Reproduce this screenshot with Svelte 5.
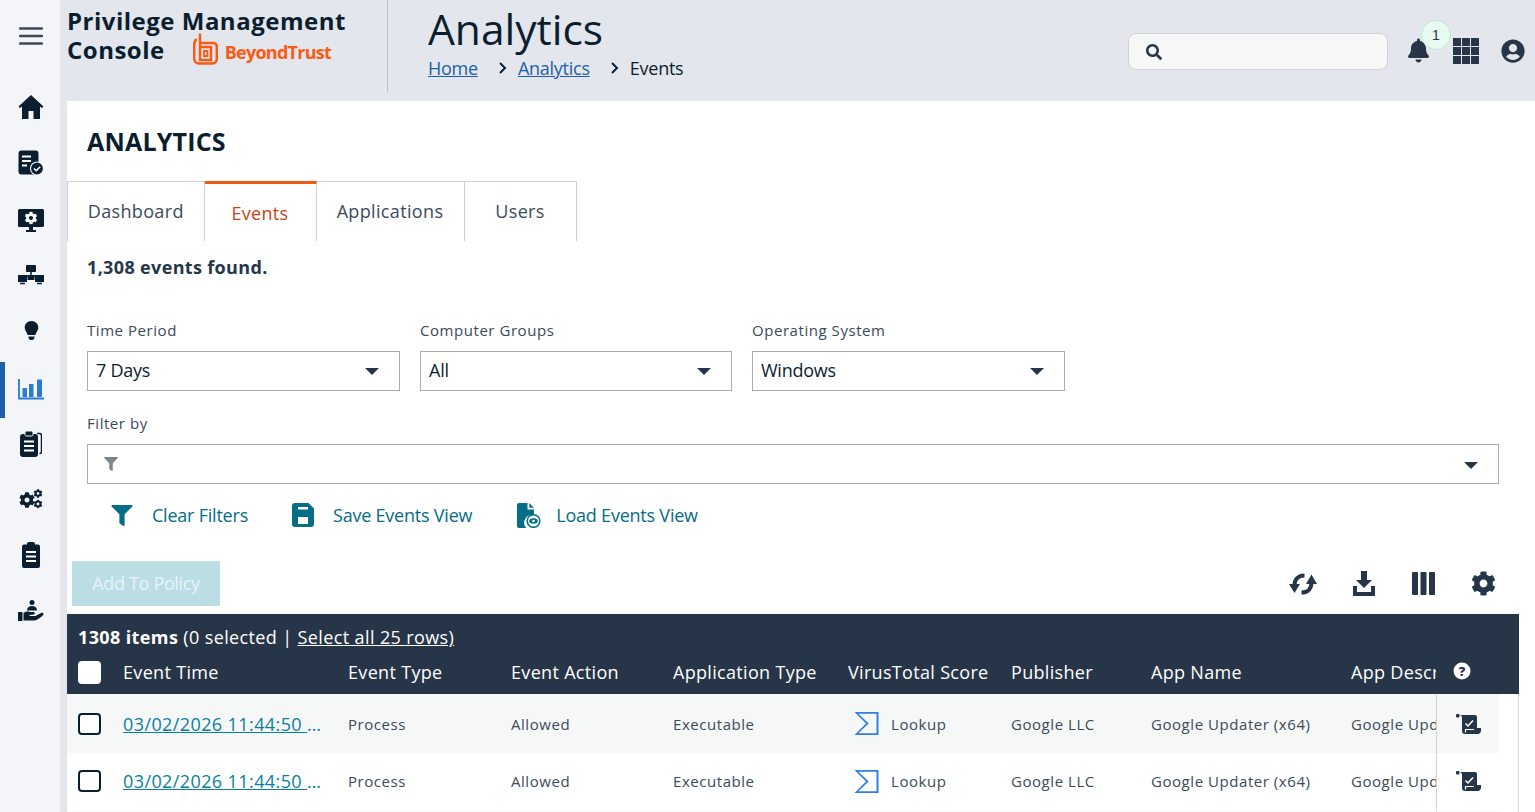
<script>
  const gear = "M487.4 315.7l-42.6-24.6c4.3-23.2 4.3-47 0-70.2l42.6-24.6c4.9-2.8 7.1-8.6 5.5-14-11.1-35.6-30-67.8-54.7-94.6-3.8-4.1-10-5.1-14.8-2.3L380.8 110c-17.9-15.4-38.5-27.3-60.8-35.1V25.8c0-5.6-3.9-10.5-9.4-11.7-36.7-8.2-74.3-7.8-109.2 0-5.5 1.2-9.4 6.1-9.4 11.7V75c-22.2 7.9-42.8 19.8-60.8 35.1L88.7 85.5c-4.9-2.8-11-1.9-14.8 2.3-24.7 26.7-43.6 58.9-54.7 94.6-1.7 5.4.6 11.2 5.5 14L67.3 221c-4.3 23.2-4.3 47 0 70.2l-42.6 24.6c-4.9 2.8-7.1 8.6-5.5 14 11.1 35.6 30 67.8 54.7 94.6 3.8 4.1 10 5.1 14.8 2.3l42.6-24.6c17.9 15.4 38.5 27.3 60.8 35.1v49.2c0 5.6 3.9 10.5 9.4 11.7 36.7 8.2 74.3 7.8 109.2 0 5.5-1.2 9.4-6.1 9.4-11.7v-49.2c22.2-7.9 42.8-19.8 60.8-35.1l42.6 24.6c4.9 2.8 11 1.9 14.8-2.3 24.7-26.7 43.6-58.9 54.7-94.6 1.5-5.5-.7-11.3-5.6-14.1zM256 336c-44.1 0-80-35.9-80-80s35.9-80 80-80 80 35.9 80 80-35.9 80-80 80z";
  const funnel = "M487.976 0H24.028C2.71 0-8.047 25.866 7.058 40.971L192 225.941V432c0 7.831 3.821 15.17 10.237 19.662l80 55.98C298.02 518.69 320 507.493 320 487.98V225.941l184.947-184.97C520.021 25.896 509.338 0 487.976 0z";
  const rows = [1, 2, 3];
  const selects = [
    { label: "Time Period", value: "7 Days" },
    { label: "Computer Groups", value: "All" },
    { label: "Operating System", value: "Windows" }
  ];
  const heads = ["Event Time", "Event Type", "Event Action", "Application Type", "VirusTotal Score", "Publisher", "App Name", "App Description"];
</script>

<div class="layout">
  <nav class="side">
    <button class="burger" aria-label="menu">
      <svg width="24" height="20" viewBox="0 0 24 20"><path d="M1 2.500h22M1 10h22M1 17.500h22" stroke="#3d4a58" stroke-width="2.400" stroke-linecap="round"/></svg>
    </button>
    <div class="nav-item">
      <svg width="26" height="26" viewBox="0 0 26 26"><path class="d" d="M13 1 L0.500 12.600 L2 14 L4 12.600 V25 H10.500 V17 H15.500 V25 H22 V12.600 L24 14 L25.500 12.600 Z"/></svg>
    </div>
    <div class="nav-item">
      <svg width="26" height="26" viewBox="0 0 26 26"><rect class="d" x="0.500" y="0.500" width="20" height="24" rx="3"/><path d="M4 6.500h9M4 11h9M4 15.500h5" stroke="#fff" stroke-width="2"/><circle cx="19" cy="18.500" r="6.500" fill="#0b1e30" stroke="#f3f5f8" stroke-width="1.200"/><path d="M16 18.500l2.200 2.200 4-4" stroke="#fff" stroke-width="1.600" fill="none"/></svg>
    </div>
    <div class="nav-item">
      <svg class="mon" width="26" height="23" viewBox="0 0 26 23"><rect class="d" x="0" y="0" width="26" height="18" rx="1.500"/><path class="d" d="M11 18h4v3h3v2H8v-2h3z"/><svg x="6.500" y="2.500" width="13" height="13" viewBox="0 0 512 512"><path d={gear} fill="#fff"/></svg></svg>
    </div>
    <div class="nav-item">
      <svg width="26" height="20" viewBox="0 0 26 20"><rect class="d" x="8" y="0" width="10" height="7" rx="1"/><path d="M13 7v4M4.500 11h17M4.500 11v2M21.500 11v2" stroke="#0b1e30" stroke-width="1.500" fill="none"/><rect class="d" x="0" y="10" width="9" height="7"/><rect class="d" x="17" y="10" width="9" height="7"/><rect class="d" x="9.500" y="10" width="7" height="5"/><path d="M2 18.500h5M19 18.500h5" stroke="#0b1e30" stroke-width="1.500"/></svg>
    </div>
    <div class="nav-item">
      <svg width="15" height="20" viewBox="0 0 16 22"><path class="d" d="M8 0C3.400 0 .5 3.300.5 7.200c0 3.300 2.400 5 3.200 8.300h8.600c.8-3.300 3.200-5 3.200-8.300C15.500 3.300 12.600 0 8 0z"/><path class="d" d="M4.500 17h7l-.6 2.500-1.400 1.500h-3l-1.400-1.500z"/></svg>
    </div>
    <div class="nav-item active">
      <svg width="26" height="21" viewBox="0 0 26 21"><path d="M1 0v19.500h25" stroke="#2c7ad6" stroke-width="1.800" fill="none"/><rect class="b" x="4.500" y="9" width="4.500" height="9"/><rect class="b" x="11" y="5" width="4.500" height="13"/><rect class="b" x="19" y="0.500" width="5" height="17.500" rx="1"/></svg>
    </div>
    <div class="nav-item">
      <svg width="22" height="27" viewBox="0 0 22 27"><path d="M17 3.500h2.500a2 2 0 0 1 2 2v16a2 2 0 0 1-2 2" stroke="#0b1e30" stroke-width="1.500" fill="none"/><rect class="d" x="0" y="4" width="18" height="23" rx="3"/><rect x="5" y="1" width="8" height="5" rx="1.500" fill="#0b1e30" stroke="#f3f5f8" stroke-width="1"/><path d="M4 11.500h10M4 16h10M4 20.500h10" stroke="#fff" stroke-width="2"/></svg>
    </div>
    <div class="nav-item">
      <svg width="24" height="20" viewBox="0 0 24 20"><svg x="0" y="3" width="16" height="16" viewBox="0 0 512 512"><path class="d" d={gear}/></svg><svg x="14.500" y="0" width="9" height="9" viewBox="0 0 512 512"><path class="d" d={gear}/></svg><svg x="14.500" y="10.500" width="9" height="9" viewBox="0 0 512 512"><path class="d" d={gear}/></svg></svg>
    </div>
    <div class="nav-item">
      <svg width="18" height="26" viewBox="0 0 18 26"><rect class="d" x="0" y="2.500" width="18" height="23.500" rx="2"/><rect class="d" x="5" y="0" width="8" height="5" rx="2"/><path d="M4 10h10M4 14.500h10M4 19h10" stroke="#fff" stroke-width="2"/></svg>
    </div>
    <div class="nav-item">
      <svg width="26" height="22" viewBox="0 0 26 22"><circle class="d" cx="14" cy="2.500" r="2.500"/><path class="d" d="M9 10.500c0-3 2-4.500 5-4.500s5 1.500 5 4.500z"/><rect class="d" x="0" y="12" width="4.500" height="9"/><path class="d" d="M5.500 13c2.500-1.500 4.500-1.800 6.500-1h3.500c1.500 0 1.700 2 .5 2.600l-4.500.4v1l6 0 5.500-3c1.800-.8 3.400.8 2 2.200-2.500 2-5.500 5-9 5.300H5.500z"/></svg>
    </div>
  </nav>

  <div class="content">
    <header class="top">
      <div class="brand">
        <div class="brand-name">Privilege Management</div>
        <div class="brand-row">
          <span class="brand-name">Console</span>
          <span class="logo">
            <svg width="25" height="32" viewBox="0 0 25 32" fill="none" stroke="#fb5a14" stroke-width="2.500"><path d="M3.500 6C2 7.500 1.200 9.500 1.200 12V25C1.200 28 3 30.500 6 30.500H19.500C22 30.500 23.800 28.500 23.800 25.500V14C23.800 11.500 22.500 10 20 10H7"/><path d="M7 0.500V27H18V14H7"/><path d="M11 18H14.500V23H11z" stroke-width="1.800"/></svg>
            <span class="logo-text">BeyondTrust</span>
          </span>
        </div>
      </div>
      <div class="crumbs">
        <h1 class="page">Analytics</h1>
        <div class="trail">
          <a href="#home">Home</a>
          <svg class="chev" width="10" height="12" viewBox="0 0 10 12"><path d="M2 1l5 5-5 5" stroke="#0b1e30" stroke-width="2" fill="none"/></svg>
          <a href="#analytics">Analytics</a>
          <svg class="chev" width="10" height="12" viewBox="0 0 10 12"><path d="M2 1l5 5-5 5" stroke="#0b1e30" stroke-width="2" fill="none"/></svg>
          <span>Events</span>
        </div>
      </div>
      <div class="tools">
        <div class="search">
          <svg width="16" height="16" viewBox="0 0 512 512"><path class="n" d="M505 442.7L405.3 343c-4.500-4.500-10.600-7-17-7H372c27.600-35.300 44-79.700 44-128C416 93.100 322.900 0 208 0S0 93.100 0 208s93.100 208 208 208c48.300 0 92.700-16.400 128-44v16.300c0 6.400 2.500 12.500 7 17l99.700 99.700c9.400 9.400 24.600 9.400 33.900 0l28.300-28.300c9.400-9.400 9.400-24.600.1-34zM208 336c-70.700 0-128-57.200-128-128 0-70.700 57.200-128 128-128 70.700 0 128 57.200 128 128 0 70.700-57.200 128-128 128z"/></svg>
        </div>
        <div class="bell">
          <svg width="21" height="25" viewBox="0 0 448 512"><path class="n" d="M224 512c35.320 0 63.970-28.650 63.970-64H160.030c0 35.350 28.650 64 63.970 64zm215.390-149.710c-19.320-20.760-55.470-51.990-55.470-154.290 0-77.700-54.480-139.900-127.940-155.160V32c0-17.670-14.320-32-31.980-32s-31.980 14.330-31.980 32v20.840C118.560 68.100 64.080 130.300 64.080 208c0 102.300-36.150 133.530-55.470 154.290-6 6.450-8.660 14.160-8.610 21.710.11 16.400 12.980 32 32.100 32h383.800c19.120 0 32-15.600 32.100-32 .05-7.550-2.610-15.270-8.610-21.710z"/></svg>
          <span class="badge">1</span>
        </div>
        <div class="apps">
          {#each Array(9) as _}<i></i>{/each}
        </div>
        <svg class="user" width="24" height="24" viewBox="0 0 496 512"><path class="n" d="M248 8C111 8 0 119 0 256s111 248 248 248 248-111 248-248S385 8 248 8zm0 96c48.600 0 88 39.400 88 88s-39.400 88-88 88-88-39.400-88-88 39.400-88 88-88zm0 344c-58.700 0-111.300-26.600-146.500-68.200 18.800-35.400 55.600-59.800 98.500-59.800 2.400 0 4.800.4 7.100 1.100 13 4.200 26.600 6.900 40.900 6.900 14.300 0 28-2.700 40.900-6.900 2.300-.7 4.700-1.100 7.100-1.100 42.900 0 79.700 24.400 98.500 59.800C359.300 421.400 306.700 448 248 448z"/></svg>
      </div>
    </header>

    <main class="main">
      <h2 class="section">ANALYTICS</h2>
      <div class="tabs">
        <div class="tab t1">Dashboard</div>
        <div class="tab t2 on">Events</div>
        <div class="tab t3">Applications</div>
        <div class="tab t4">Users</div>
      </div>
      <div class="found">1,308 events found.</div>

      <div class="selects">
        {#each selects as s}
          <div>
            <div class="lbl">{s.label}</div>
            <div class="select"><span>{s.value}</span><i class="caret"></i></div>
          </div>
        {/each}
      </div>

      <div class="filter">
        <div class="lbl">Filter by</div>
        <div class="select">
          <svg class="fil" width="14" height="14" viewBox="0 0 512 512"><path d={funnel} fill="#7f8489"/></svg>
          <i class="caret"></i>
        </div>
      </div>

      <div class="actions">
        <a class="act a1" href="#clear">
          <svg width="22" height="21" viewBox="0 0 512 512"><path d={funnel} class="t"/></svg>
          <span>Clear Filters</span>
        </a>
        <a class="act a2" href="#save">
          <svg width="22" height="24" viewBox="0 0 22 24"><path fill-rule="evenodd" class="t" d="M3 0h13.500l5.500 5.500V21a3 3 0 0 1-3 3H3a3 3 0 0 1-3-3V3a3 3 0 0 1 3-3zM6 4v2.500h10V4zM6 14v7h10v-7z"/></svg>
          <span>Save Events View</span>
        </a>
        <a class="act a3" href="#load">
          <svg width="24" height="25" viewBox="0 0 24 25"><path class="t" d="M2 0h8.500v6.500H17v6A7.500 7.500 0 0 0 9.500 25H2a2 2 0 0 1-2-2V2a2 2 0 0 1 2-2zM12.300 0 17 4.800h-4.700z"/><circle cx="16.500" cy="18" r="6.300" fill="#fff" stroke="#056d85" stroke-width="1.500"/><ellipse cx="16.500" cy="18" rx="4.300" ry="2.800" class="t"/><circle cx="16.500" cy="18" r="1.300" fill="#fff"/></svg>
          <span>Load Events View</span>
        </a>
      </div>

      <div class="bar">
        <button class="add" disabled>Add To Policy</button>
        <div class="bar-icons">
          <span class="bi">
            <svg width="28" height="24" viewBox="0 0 28 24"><path d="M15.500 3.500C9 3.500 5.500 7.500 5.500 13.500" stroke="#263648" stroke-width="4" fill="none"/><path class="n" d="M0 12H11L5.500 21z"/><path d="M12.500 20.500C19 20.500 22.500 16.500 22.500 10.500" stroke="#263648" stroke-width="4" fill="none"/><path class="n" d="M17 12H28L22.500 2.500z"/></svg>
          </span>
          <span class="bi dl">
            <svg width="22" height="25" viewBox="0 0 22 25"><path class="n" d="M8 0h6v9h5l-8 8-8-8h5z"/><path class="n" d="M0 15h4v6h14v-6h4v10H0z"/></svg>
          </span>
          <span class="bi">
            <svg width="23" height="23" viewBox="0 0 23 23"><rect class="n" x="0" y="0" width="6" height="23" rx="1"/><rect class="n" x="8.500" y="0" width="6" height="23" rx="1"/><rect class="n" x="17" y="0" width="6" height="23" rx="1"/></svg>
          </span>
          <span class="bi">
            <svg width="25" height="25" viewBox="0 0 512 512"><path class="n" d={gear}/></svg>
          </span>
        </div>
      </div>

      <div class="table">
        <div class="thead">
          <div class="summary"><b>1308 items</b> (0 selected | <u>Select all 25 rows)</u></div>
          <div class="grid hrow">
            <span class="hcheck"></span>
            {#each heads as h}<span class="cell">{h}</span>{/each}
            <span class="help">
              <svg width="18" height="18" viewBox="0 0 18 18"><circle cx="9" cy="9" r="8.500" fill="#fff"/><text x="9" y="13.500" text-anchor="middle" class="q">?</text></svg>
            </span>
          </div>
        </div>
        <div class="tbody">
          {#each rows as r}
            <div class="grid row">
              <span class="check"></span>
              <span class="cell time"><a href="#event">03/02/2026 11:44:50 AM</a></span>
              <span class="cell">Process</span>
              <span class="cell">Allowed</span>
              <span class="cell">Executable</span>
              <span class="cell vt">
                <svg width="25" height="23" viewBox="0 0 25 23"><path fill-rule="evenodd" fill="#2f7fe8" d="M.5 0h24v23H.5L12 11.500zM4.500 1.800 14.600 11.500 4.500 21.200H22.500V1.800z"/></svg>
                <span>Lookup</span>
              </span>
              <span class="cell">Google LLC</span>
              <span class="cell">Google Updater (x64)</span>
              <span class="cell">Google Update</span>
              <span class="act-cell">
                <svg width="25" height="20" viewBox="0 0 25 20"><rect class="n" x="0" y="0" width="3.500" height="3.500" rx="1"/><path class="n" d="M4 1h15a2 2 0 0 1 2 2v11h4v2.500c0 2-1.500 3.500-3 3.500H9c-2 0-3-1-3-3V4c0-1.500-.5-2.500-2-3z"/><path d="M9.500 9.500l2.500 2.500 5-5.500" stroke="#fff" stroke-width="1.500" fill="none"/><path d="M9 15.500h9M9.500 15.500v3" stroke="#fff" stroke-width="1.200" fill="none"/></svg>
              </span>
            </div>
          {/each}
        </div>
      </div>
    </main>
  </div>
</div>

<style>
  :global(body) {
    margin: 0;
    height: 812px;
    overflow: hidden;
    font-family: "Open Sans", "Noto Sans", sans-serif;
    background: #e3e6ec;
  }
  .d { fill: #0b1e30; }
  .b { fill: #2c7ad6; }
  .n { fill: #263648; }
  .t { fill: #056d85; }

  .layout { display: flex; height: 812px; overflow: hidden; }

  .side { width: 60px; box-sizing: border-box; padding-left: 2px; flex: none; background: #f3f5f8; display: flex; flex-direction: column; align-items: stretch; }
  .burger { height: 79px; padding: 0 0 7px; border: 0; background: none; display: flex; align-items: center; justify-content: center; }
  .nav-item { height: 56px; flex: none; display: flex; align-items: center; justify-content: center; position: relative; }
  .active::before { content: ""; position: absolute; left: -2px; top: 3px; width: 5px; height: 56px; background: #1c5fa8; }
  .active svg { margin-top: 4px; }
  .mon { margin-top: 2px; }

  .content { flex: 1; min-width: 0; display: flex; flex-direction: column; }

  .top { height: 101px; flex: none; display: flex; color: #0b1e30; }
  .brand { width: 328px; height: 92px; box-sizing: border-box; padding: 6px 0 0 7px; border-right: 1px solid #b9c0cb; }
  .brand-name { font-size: 24px; font-weight: 700; line-height: 29px; letter-spacing: .5px; }
  .brand-row { display: flex; align-items: flex-start; }
  .logo { display: flex; align-items: center; margin: -2px 0 0 28px; gap: 7px; }
  .logo-text { font-size: 18px; font-weight: 700; color: #fb5a14; letter-spacing: -.75px; line-height: 24px; margin-top: 6px; }
  .crumbs { padding-left: 40px; }
  .page { margin: 0; font-size: 42.500px; font-weight: 400; line-height: 50px; margin-top: 4px; color: #0b1e30; }
  .trail { display: flex; align-items: center; font-size: 18px; line-height: 24px; margin-top: 2px; letter-spacing: -.25px; }
  .trail a { color: #1c5fa8; }
  .chev { margin: 0 10px 0 20px; }
  .tools { margin-left: auto; display: flex; align-items: flex-start; }
  .search { width: 260px; height: 37px; margin-top: 33px; box-sizing: border-box; background: #f6f8f8; border: 1px solid #d0d3d8; border-radius: 8px; display: flex; align-items: center; padding-left: 17px; }
  .bell { position: relative; margin: 38px 0 0 20px; height: 25px; width: 20px; }
  .badge { position: absolute; left: 13px; top: -18px; width: 30px; height: 30px; box-sizing: border-box; border-radius: 50%; background: #e8fbf1; border: 1px solid #b8eed0; display: flex; align-items: center; justify-content: center; font-size: 14px; color: #263648; font-family: "Liberation Sans", sans-serif; }
  .apps { margin: 38px 0 0 25px; display: grid; grid-template-columns: repeat(3, 8px); grid-auto-rows: 8px; gap: 1px; }
  .apps i { background: #263648; display: block; }
  .user { margin: 39px 10px 0 22px; }

  .main { flex: 1; margin-left: 7px; background: #fff; }
  .section { margin: 0 0 0 20px; height: 80px; box-sizing: border-box; padding-top: 23px; font-size: 25px; line-height: 34px; font-weight: 700; color: #0b1e30; letter-spacing: .2px; }
  .tabs { display: flex; height: 60px; }
  .tab { box-sizing: border-box; border: 1px solid #cfd2d6; border-bottom: 0; border-left: 0; display: flex; align-items: center; justify-content: center; font-size: 18px; color: #3a4a5c; padding-bottom: 2px; letter-spacing: .35px; }
  .t1 { width: 137.500px; border-left: 1px solid #cfd2d6; }
  .t2 { width: 112px; }
  .t3 { width: 148px; }
  .t4 { width: 112px; }
  .on { border-top: 3px solid #f05a14; color: #c8431a; letter-spacing: .3px; padding-bottom: 0; }
  .found { height: 52px; padding-left: 20px; display: flex; align-items: center; font-size: 18px; font-weight: 700; color: #26374a; letter-spacing: .35px; }

  .lbl { height: 20px; line-height: 20px; font-size: 15px; color: #3a4a5c; letter-spacing: .55px; margin-bottom: 11px; }
  .selects { margin: 27px 0 0 20px; display: grid; grid-template-columns: 313px 312px 313px; gap: 20px; }
  .select { height: 40px; box-sizing: border-box; border: 1px solid #a9acb1; display: flex; align-items: center; justify-content: space-between; padding: 0 20px 2px 8px; font-size: 18px; color: #0b1e30; letter-spacing: -.25px; }
  .caret { width: 0; height: 0; border-left: 7px solid transparent; border-right: 7px solid transparent; border-top: 7px solid #263648; margin-top: 2px; }
  .filter { margin: 22px 36px 0 20px; }
  .filter .select { padding-bottom: 0; }
  .fil { margin-left: 8px; }

  .actions { display: flex; height: 40px; margin-top: 11px; align-items: center; }
  .act { display: flex; align-items: center; color: #056d85; font-size: 18px; text-decoration: none; letter-spacing: -.22px; }
  .act svg { flex: none; }
  .a1 { margin-left: 44px; gap: 19px; }
  .a2 { margin-left: 44px; gap: 19px; }
  .a3 { margin-left: 45px; gap: 15px; }

  .bar { display: flex; justify-content: space-between; align-items: center; height: 45px; margin: 26px 22px 0 5px; }
  .add { width: 148px; height: 45px; border: 0; background: #bbdde4; color: #e9f4f6; font: inherit; font-size: 18px; letter-spacing: -.33px; padding: 0 0 2px; }
  .bar-icons { display: flex; }
  .bi { width: 60px; display: flex; justify-content: center; align-items: center; }
  .dl { padding-left: 1px; box-sizing: border-box; }

  .table { margin: 8px 16px 0 0; }
  .thead { background: #263648; color: #fff; height: 80px; }
  .summary { padding: 11px 0 0 11px; font-size: 18px; line-height: 24px; height: 36px; box-sizing: border-box; letter-spacing: .38px; }
  .summary b { font-weight: 700; }
  .grid { display: grid; grid-template-columns: 56px 225px 163px 162px 175px 163px 140px 200px 85px 83px; align-items: center; }
  .hrow { height: 44px; font-size: 18px; letter-spacing: .32px; }
  .cell { overflow: hidden; white-space: nowrap; }
  .hcheck { width: 23px; height: 23px; margin-left: 11px; background: #fff; border-radius: 4px; }
  .help { display: flex; padding: 0 0 2px 17px; }
  .q { font-size: 13px; font-weight: 800; fill: #263648; font-family: "Open Sans", sans-serif; letter-spacing: 0; }

  .tbody { border-right: 1px solid #d8dadd; height: 120px; }
  .row { height: 58.500px; box-sizing: border-box; grid-template-columns: 56px 225px 163px 162px 175px 163px 140px 200px 85px 63px; font-size: 15px; color: #3c4a5a; letter-spacing: .55px; width: 1432px; }
  .row:nth-child(odd) { background: #f6f8f8; }
  .row:nth-child(even) { background: #fff; }
  .row:nth-child(1) { padding-top: 1px; }
  .row:nth-child(2) { padding-bottom: 1px; }
  .check { width: 23px; height: 22px; box-sizing: border-box; margin-left: 11px; border: 2px solid #0b1e30; border-radius: 4px; background: #fff; }
  .time { font-size: 18px; letter-spacing: .4px; width: 199px; text-overflow: ellipsis; color: #0a7f9c; }
  .time a { color: #0a7f9c; }
  .vt { display: flex; align-items: center; gap: 12px; padding-left: 6px; }
  .act-cell { height: 100%; border-left: 1px solid #cfd2d6; display: flex; align-items: center; padding-left: 19px; box-sizing: border-box; }
</style>
